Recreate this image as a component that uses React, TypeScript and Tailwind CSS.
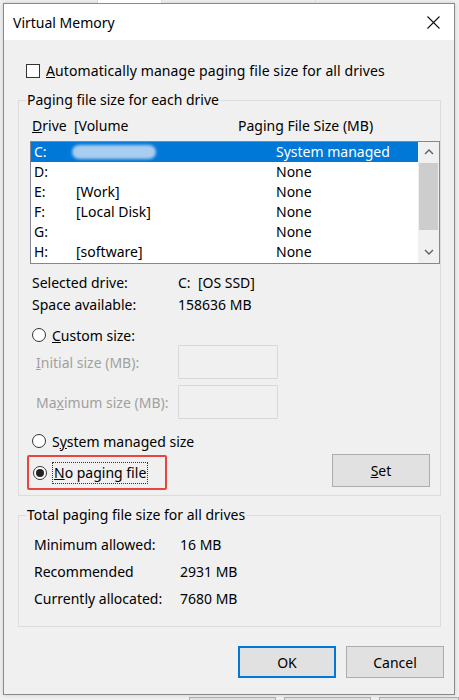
import type { ReactNode } from "react";

type DriveRow = {
  drive: string;
  volume: string;
  size: string;
  selected?: boolean;
  hidden?: boolean;
};

const drives: DriveRow[] = [
  { drive: "C:", volume: "", size: "System managed", selected: true, hidden: true },
  { drive: "D:", volume: "", size: "None" },
  { drive: "E:", volume: "[Work]", size: "None" },
  { drive: "F:", volume: "[Local Disk]", size: "None" },
  { drive: "G:", volume: "", size: "None" },
  { drive: "H:", volume: "[software]", size: "None" }
];

function Radio({ checked }: { checked?: boolean }) {
  return (
    <span className="flex h-[14px] w-[14px] shrink-0 items-center justify-center rounded-full border border-[#333] bg-white">
      {checked ? <span className="h-[8px] w-[8px] rounded-full bg-[#222]" /> : null}
    </span>
  );
}

function Chevron({ up }: { up?: boolean }) {
  return (
    <svg width="10" height="6" viewBox="0 0 10 6" fill="none">
      <polyline
        points={up ? "1,5 5,1 9,5" : "1,1 5,5 9,1"}
        stroke="#606060"
        strokeWidth="1.4"
      />
    </svg>
  );
}

function GroupBox({ title, className, children }: { title: string; className: string; children: ReactNode }) {
  return (
    <fieldset className={`ml-[14px] w-[423px] border border-[#dcdcdc] px-0 ${className}`}>
      <legend className="ml-[7px] px-[1px] leading-[20px]">{title}</legend>
      {children}
    </fieldset>
  );
}

function Button({ children, focused }: { children: ReactNode; focused?: boolean }) {
  return (
    <button
      type="button"
      className={`flex h-[32px] w-[98px] items-center justify-center bg-[#e1e1e1] ${
        focused ? "border-2 border-[#0078d7]" : "border border-[#adadad]"
      }`}
    >
      {children}
    </button>
  );
}

export default function App() {
  return (
    <div className="h-[700px] w-[459px] overflow-hidden bg-[#f0f0f0] font-['Noto_Sans',sans-serif] text-[14px] text-black">
      {/* tab strip of the window behind, mostly hidden by the dialog */}
      <div className="flex h-[3px] overflow-hidden bg-[#f0f0f0] text-[14px] leading-[17px] text-[#222]">
        <div className="-mt-[14px] w-[98px] border-r border-[#d9d9d9] pl-[8px]">Visual Effects</div>
        <div className="-mt-[14px] w-[64px] border-r border-[#d9d9d9] bg-white pl-[4px]">Advanced</div>
        <div className="-mt-[14px] w-[154px] border-r border-[#d9d9d9] pl-[4px]">Data Execution Prevention</div>
      </div>

      <div className="ml-[3px] flex h-[692px] w-[452px] flex-col border border-[#8a8a8a] bg-[#f0f0f0] shadow-[0_0_4px_rgba(0,0,0,0.15)]">
        <div className="flex h-[36px] items-center justify-between bg-white pl-[9px] pr-[14px]">
          <span className="text-[14px]">Virtual Memory</span>
          <svg width="13" height="13" viewBox="0 0 13 13">
            <path d="M0.5 0.5 L12.5 12.5 M12.5 0.5 L0.5 12.5" stroke="#111" strokeWidth="1.1" />
          </svg>
        </div>

        <div className="flex flex-col">
          <label className="ml-[22px] mt-[21px] flex h-[20px] items-center gap-[6px] leading-[20px]">
            <span className="h-[14px] w-[14px] shrink-0 border border-[#333] bg-white" />
            <span className="tracking-[0.1px]">
              <u>A</u>utomatically manage paging file size for all drives
            </span>
          </label>

          <GroupBox title="Paging file size for each drive" className="mt-[9px] pb-[4px]">
            <div className="mt-[6px] flex h-[20px] items-center pl-[13px] leading-[20px]">
              <span className="w-[206px]">
                <u>D</u>rive&nbsp;&nbsp;[Volume
              </span>
              <span>Paging File Size (MB)</span>
            </div>

            <div className="ml-[11px] mt-[5px] flex h-[123px] w-[410px] border border-[#828790] bg-white">
              <div className="flex flex-1 flex-col">
                {drives.map((row) => (
                  <div
                    key={row.drive}
                    className={`flex h-[20px] items-center leading-[20px] ${
                      row.selected ? "bg-[#0078d7] text-white" : ""
                    }`}
                  >
                    <span className="w-[45px] pl-[3px]">{row.drive}</span>
                    <span className="w-[200px]">
                      {row.hidden ? (
                        <span className="-ml-[4px] block h-[14px] w-[84px] rounded-full bg-[#a9cdef] blur-[1.5px]" />
                      ) : (
                        row.volume
                      )}
                    </span>
                    <span>{row.size}</span>
                  </div>
                ))}
              </div>
              <div className="flex w-[21px] flex-col bg-[#f0f0f0]">
                <div className="flex h-[20px] items-center justify-center">
                  <Chevron up />
                </div>
                <div className="mx-[1px] mt-[1px] h-[67px] bg-[#cdcdcd]" />
                <div className="flex-1" />
                <div className="mb-[1px] flex h-[20px] items-center justify-center">
                  <Chevron />
                </div>
              </div>
            </div>

            <div className="mt-[7px] flex h-[22px] items-center pl-[13px]">
              <span className="w-[146px]">Selected drive:</span>
              <span>C:&nbsp;&nbsp;[OS SSD]</span>
            </div>
            <div className="flex h-[22px] items-center pl-[13px]">
              <span className="w-[146px]">Space available:</span>
              <span>158636 MB</span>
            </div>

            <div className="mt-[10px] flex h-[20px] items-center gap-[6px] pl-[13px]">
              <Radio />
              <span>
                <u>C</u>ustom size:
              </span>
            </div>
            <div className="flex h-[34px] items-center pl-[17px] text-[#a0a0a0]">
              <span className="w-[142px]">
                <u>I</u>nitial size (MB):
              </span>
              <span className="h-[34px] w-[100px] border border-[#d9d9d9]" />
            </div>
            <div className="mt-[6px] flex h-[34px] items-center pl-[17px] text-[#a0a0a0]">
              <span className="w-[142px]">
                Ma<u>x</u>imum size (MB):
              </span>
              <span className="h-[34px] w-[100px] border border-[#d9d9d9]" />
            </div>

            <div className="mt-[12px] flex h-[20px] items-center gap-[6px] pl-[13px]">
              <Radio />
              <span>
                S<u>y</u>stem managed size
              </span>
            </div>

            <div className="mt-[3px] flex h-[37px] items-start pr-[10px]">
              <div className="ml-[8px] mt-[1px] flex h-[35px] w-[140px] items-center gap-[5px] rounded-[2px] border-2 border-[#e8453c] pl-[4px]">
                <Radio checked />
                <span className="border border-dotted border-[#333] px-[1px] leading-[20px]">
                  <u>N</u>o paging file
                </span>
              </div>
              <div className="ml-auto">
                <button
                  type="button"
                  className="flex h-[33px] w-[98px] items-center justify-center border border-[#adadad] bg-[#e1e1e1]"
                >
                  <u>S</u>et
                </button>
              </div>
            </div>
          </GroupBox>

          <GroupBox title="Total paging file size for all drives" className="mt-[9px] pb-[14px]">
            <div className="mt-[6px] flex h-[27px] items-center pl-[15px]">
              <span className="w-[146px]">Minimum allowed:</span>
              <span>16 MB</span>
            </div>
            <div className="flex h-[27px] items-center pl-[15px]">
              <span className="w-[146px]">Recommended</span>
              <span>2931 MB</span>
            </div>
            <div className="flex h-[27px] items-center pl-[15px]">
              <span className="w-[146px]">Currently allocated:</span>
              <span>7680 MB</span>
            </div>
          </GroupBox>

          <div className="mr-[10px] mt-[19px] flex justify-end gap-[10px]">
            <Button focused>OK</Button>
            <Button>Cancel</Button>
          </div>
        </div>
      </div>

      {/* buttons of the window behind */}
      <div className="mt-[2px] flex h-[10px]">
        <div className="ml-[189px] w-[87px] border border-[#adadad] bg-[#e1e1e1]" />
        <div className="ml-[8px] w-[87px] border border-[#adadad] bg-[#e1e1e1]" />
        <div className="ml-[8px] flex-1 border border-[#adadad] bg-[#e1e1e1]" />
      </div>
    </div>
  );
}
